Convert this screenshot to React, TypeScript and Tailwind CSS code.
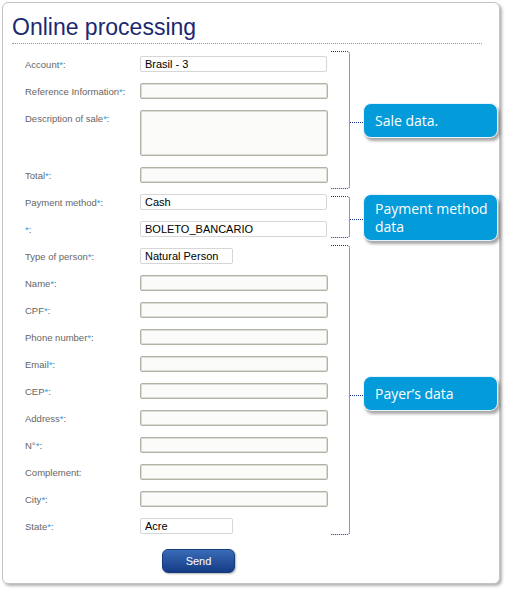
import React from "react";

type Row = {
  label: string;
  star?: boolean;
  kind: "select" | "selectShort" | "text" | "area";
  value?: string;
};

const rows: Row[] = [
  { label: "Account", star: true, kind: "select", value: "Brasil - 3" },
  { label: "Reference Information", star: true, kind: "text" },
  { label: "Description of sale", star: true, kind: "area" },
  { label: "Total", star: true, kind: "text" },
  { label: "Payment method", star: true, kind: "select", value: "Cash" },
  { label: "", star: true, kind: "select", value: "BOLETO_BANCARIO" },
  { label: "Type of person", star: true, kind: "selectShort", value: "Natural Person" },
  { label: "Name", star: true, kind: "text" },
  { label: "CPF", star: true, kind: "text" },
  { label: "Phone number", star: true, kind: "text" },
  { label: "Email", star: true, kind: "text" },
  { label: "CEP", star: true, kind: "text" },
  { label: "Address", star: true, kind: "text" },
  { label: "N°", star: true, kind: "text" },
  { label: "Complement", star: false, kind: "text" },
  { label: "City", star: true, kind: "text" },
  { label: "State", star: true, kind: "selectShort", value: "Acre" },
];

function Field({ row }: { row: Row }) {
  if (row.kind === "select" || row.kind === "selectShort") {
    return (
      <div
        className={`${row.kind === "select" ? "w-[187px]" : "w-[93px]"} h-[16px] border border-[#d6d6d6] bg-white rounded-[2px] pl-[4px] text-[11px] leading-[14px] text-black`}
      >
        {row.value}
      </div>
    );
  }
  return (
    <div
      className={`w-[188px] ${row.kind === "area" ? "h-[46px]" : "h-[16px]"} border border-[#b3b3aa] rounded-[2px] bg-[#fbfbf9] shadow-[inset_0_0_0_1px_#dcdcd5]`}
    />
  );
}

function Bracket({ top, height, tick, callTop, callH, children }: { top: number; height: number; tick: number; callTop: number; callH: number; children: React.ReactNode }) {
  return (
    <>
      <div
        className="absolute left-[328px] w-[19px] border-t border-r border-b border-dotted border-[#17338f] rounded-r-[3px]"
        style={{ top, height }}
      />
      <div className="absolute left-[347px] w-[13px] border-t border-dotted border-[#17338f]" style={{ top: tick }} />
      <div
        className="absolute left-[360px] w-[135px] bg-[#039bda] rounded-[8px] border border-[#e8f4fb] shadow-[2px_3px_3px_rgba(0,0,0,0.35)] flex items-center pl-[11px] text-white text-[14px] leading-[18px]"
        style={{ top: callTop, height: callH, fontFamily: '"Open Sans", "Noto Sans", sans-serif' }}
      >
        <div>{children}</div>
      </div>
    </>
  );
}

export default function App() {
  return (
    <div className="bg-white w-[505px] h-[590px] pt-[2px] pl-[2px]" style={{ fontFamily: '"Liberation Sans", Arial, sans-serif' }}>
      <div className="relative w-[498px] h-[582px] border border-[#c4c4c4] rounded-[6px] shadow-[2px_2px_3px_rgba(0,0,0,0.3)] bg-white pt-[11px]">
        <div className="ml-[9px] w-[470px] border-b border-dotted border-[#7f92c4] pb-[2px]">
          <h1 className="text-[23px] leading-[27px] text-[#1b2a70]">Online processing</h1>
        </div>
        <div className="ml-[22px] mt-[12px] flex flex-col gap-[11px]">
          {rows.map((r, i) => (
            <div key={i} className="flex items-start">
              <div className="w-[115px] h-[16px] text-[9.5px] leading-[17px] text-[#666666] whitespace-nowrap">
                {r.label}
                {r.star && <span className="text-[#2f9fe6]">*</span>}:
              </div>
              <Field row={r} />
            </div>
          ))}
        </div>
        <div className="ml-[159px] mt-[14px]">
          <button className="w-[73px] h-[24px] rounded-[6px] border border-[#163a7c] bg-gradient-to-b from-[#3a6cb8] to-[#163b85] text-white text-[11px] shadow-[1px_1px_2px_rgba(0,0,0,0.3)]">
            Send
          </button>
        </div>

        <Bracket top={48} height={138} tick={119} callTop={100} callH={35}>Sale data.</Bracket>
        <Bracket top={193} height={42} tick={216} callTop={191} callH={47}>
          Payment method
          <br />
          data
        </Bracket>
        <Bracket top={242} height={290} tick={392} callTop={373} callH={35}>Payer’s data</Bracket>
      </div>
    </div>
  );
}
